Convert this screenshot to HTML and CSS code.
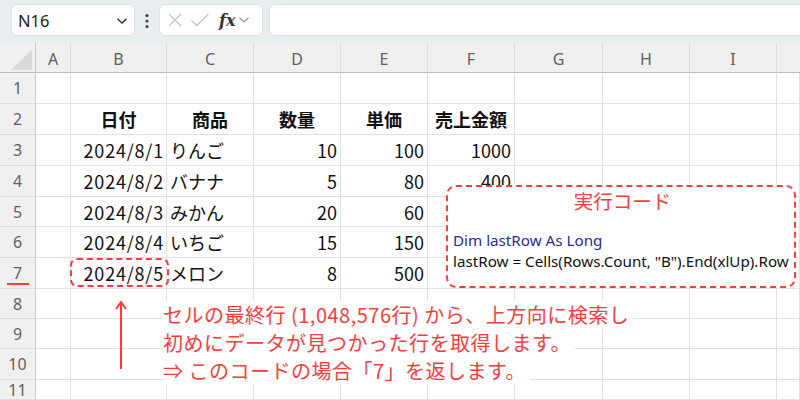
FILE: index.html
```html
<!DOCTYPE html>
<html lang="ja">
<head>
<meta charset="utf-8">
<title>Excel lastRow</title>
<link rel="stylesheet" href="styles.css">
</head>
<body>
<div class="app">
  <div class="toolbar">
    <div class="namebox">
      <span class="name">N16</span>
      <svg class="chev" width="12" height="8" viewBox="0 0 12 8"><path d="M1.5 1.8 L6 6 L10.5 1.8" fill="none" stroke="#333" stroke-width="1.4"/></svg>
    </div>
    <svg class="dots" width="6" height="16" viewBox="0 0 6 16"><circle cx="3" cy="2.5" r="1.6" fill="#444"/><circle cx="3" cy="8" r="1.6" fill="#444"/><circle cx="3" cy="13.5" r="1.6" fill="#444"/></svg>
    <div class="fxgroup">
      <svg width="16" height="16" viewBox="0 0 16 16"><path d="M2 2 L14 14 M14 2 L2 14" stroke="#c4c4c4" stroke-width="1.3" fill="none"/></svg>
      <svg width="20" height="16" viewBox="0 0 20 16"><path d="M1.5 8.5 L7 13.5 L18.5 2" stroke="#c4c4c4" stroke-width="1.3" fill="none"/></svg>
      <span class="fx">fx</span>
      <svg width="12" height="8" viewBox="0 0 12 8"><path d="M1.5 1.8 L6 6 L10.5 1.8" fill="none" stroke="#9a9a9a" stroke-width="1.2"/></svg>
    </div>
    <div class="formula"></div>
  </div>

  <div class="sheet">
    <div class="corner"><span class="tri"></span></div>
    <div class="ch">A</div><div class="ch">B</div><div class="ch">C</div><div class="ch">D</div><div class="ch">E</div><div class="ch">F</div><div class="ch">G</div><div class="ch">H</div><div class="ch">I</div><div class="ch last"></div>

    <div class="rh">1</div><div class="c"></div><div class="c"></div><div class="c"></div><div class="c"></div><div class="c"></div><div class="c"></div><div class="c"></div><div class="c"></div><div class="c"></div><div class="c"></div>

    <div class="rh">2</div><div class="c"></div><div class="c hd">日付</div><div class="c hd">商品</div><div class="c hd">数量</div><div class="c hd">単価</div><div class="c hd">売上金額</div><div class="c"></div><div class="c"></div><div class="c"></div><div class="c"></div>

    <div class="rh">3</div><div class="c"></div><div class="c r dt">2024/8/1</div><div class="c l">りんご</div><div class="c r">10</div><div class="c r">100</div><div class="c r">1000</div><div class="c"></div><div class="c"></div><div class="c"></div><div class="c"></div>

    <div class="rh">4</div><div class="c"></div><div class="c r dt">2024/8/2</div><div class="c l">バナナ</div><div class="c r">5</div><div class="c r">80</div><div class="c r">400</div><div class="c"></div><div class="c"></div><div class="c"></div><div class="c"></div>

    <div class="rh">5</div><div class="c"></div><div class="c r dt">2024/8/3</div><div class="c l">みかん</div><div class="c r">20</div><div class="c r">60</div><div class="c"></div><div class="c"></div><div class="c"></div><div class="c"></div><div class="c"></div>

    <div class="rh">6</div><div class="c"></div><div class="c r dt">2024/8/4</div><div class="c l">いちご</div><div class="c r">15</div><div class="c r">150</div><div class="c"></div><div class="c"></div><div class="c"></div><div class="c"></div><div class="c"></div>

    <div class="rh">7</div><div class="c"></div><div class="c r dt">2024/8/5</div><div class="c l">メロン</div><div class="c r">8</div><div class="c r">500</div><div class="c"></div><div class="c"></div><div class="c"></div><div class="c"></div><div class="c"></div>

    <div class="rh">8</div><div class="c"></div><div class="c"></div><div class="c"></div><div class="c"></div><div class="c"></div><div class="c"></div><div class="c"></div><div class="c"></div><div class="c"></div><div class="c"></div>

    <div class="rh">9</div><div class="c"></div><div class="c"></div><div class="c"></div><div class="c"></div><div class="c"></div><div class="c"></div><div class="c"></div><div class="c"></div><div class="c"></div><div class="c"></div>

    <div class="rh">10</div><div class="c"></div><div class="c"></div><div class="c"></div><div class="c"></div><div class="c"></div><div class="c"></div><div class="c"></div><div class="c"></div><div class="c"></div><div class="c"></div>

    <div class="rh">11</div><div class="c"></div><div class="c"></div><div class="c"></div><div class="c"></div><div class="c"></div><div class="c"></div><div class="c"></div><div class="c"></div><div class="c"></div><div class="c"></div>
  </div>

  <div class="rowmark"></div>
  <div class="datebox"></div>
  <svg class="arrow" width="16" height="72" viewBox="0 0 16 72"><path d="M8 3 L8 70 M3 10 L8 3 L13 10" fill="none" stroke="#ff3b3b" stroke-width="2"/></svg>

  <div class="codebox">
    <div class="codetitle">実行コード</div>
    <div class="code">
      <div class="kw">Dim lastRow As Long</div>
      <div>lastRow = Cells(Rows.Count, "B").End(xlUp).Row</div>
    </div>
  </div>

  <div class="note">
    <span class="line">セルの最終行 (1,048,576行) から、上方向に検索し</span>
    <span class="line">初めにデータが見つかった行を取得します。</span>
    <span class="line">⇒ このコードの場合「7」を返します。</span>
  </div>
</div>
</body>
</html>
```

FILE: styles.css
```css
* { box-sizing: border-box; }
html, body { margin: 0; padding: 0; }
body {
  width: 800px;
  height: 400px;
  overflow: hidden;
  background: #fff;
  font-family: "Noto Sans CJK JP", "Noto Sans", sans-serif;
}
.app { position: relative; width: 800px; height: 400px; overflow: hidden; }

.toolbar {
  height: 43px;
  background: #e8edf0;
  display: flex;
  align-items: flex-start;
  padding: 4px 0 0 11px;
}
.namebox {
  width: 124px;
  height: 32px;
  background: #fff;
  border: 1px solid #dde2e6;
  border-radius: 6px;
  display: flex;
  align-items: center;
  justify-content: space-between;
  padding: 0 6px 0 6px;
}
.name { font-family: "Noto Sans", sans-serif; font-size: 16.5px; color: #222; }
.chev { margin-top: 2px; }
.dots { margin: 9px 9px 0 9px; }
.fxgroup {
  width: 104px;
  height: 32px;
  background: #fff;
  border: 1px solid #dde2e6;
  border-radius: 6px;
  display: flex;
  align-items: center;
  padding: 0 4px 0 7px;
  gap: 7px;
}
.fx {
  font-family: "DejaVu Serif", serif;
  font-style: italic;
  font-weight: bold;
  font-size: 16px;
  color: #333;
  margin-left: 2px;
  margin-right: -4px;
}
.formula {
  margin-left: 6px;
  flex: 1;
  height: 32px;
  background: #fff;
  border: 1px solid #dde2e6;
  border-right: none;
  border-radius: 6px 0 0 6px;
}

.sheet {
  display: grid;
  grid-template-columns: 36px 35px 96px 87px 87px 87px 87px 88px 87px 87px 23px;
  grid-template-rows: 30px 31px 31px 31px 31px 30px 31px 31px 30px 30px 31px 20px;
  background: #fff;
}
.corner {
  background: #f0f0f0;
  border-right: 1px solid #c8c8c8;
  border-bottom: 1px solid #bdbdbd;
  position: relative;
}
.tri {
  position: absolute;
  right: 3px;
  bottom: 2px;
  width: 0; height: 0;
  border-left: 21px solid transparent;
  border-bottom: 21px solid #dadada;
}
.ch {
  background: #f0f0f0;
  border-right: 1px solid #dcdcdc;
  border-bottom: 1px solid #bdbdbd;
  display: flex;
  align-items: center;
  justify-content: center;
  font-family: "Noto Sans", sans-serif;
  font-size: 16px;
  color: #5f5f5f;
  padding-top: 2px;
}
.ch.last { border-right: none; }
.rh {
  background: #f0f0f0;
  border-right: 1px solid #c8c8c8;
  border-bottom: 1px solid #dcdcdc;
  display: flex;
  align-items: center;
  justify-content: center;
  font-family: "Noto Sans", sans-serif;
  font-size: 16px;
  color: #5f5f5f;
}
.c {
  border-right: 1px solid #e2e2e2;
  border-bottom: 1px solid #e2e2e2;
  display: flex;
  align-items: center;
  font-size: 18px;
  color: #111;
  white-space: nowrap;
}
.hd { justify-content: center; font-weight: bold; }
.r { justify-content: flex-end; padding-right: 3px; }
.l { justify-content: flex-start; padding-left: 3px; }
.dt { letter-spacing: 0.8px; padding-right: 2px; }

.rowmark {
  position: absolute;
  left: 7px; top: 283px;
  width: 22px; height: 2px;
  background: #ff3b3b;
}
.datebox {
  position: absolute;
  left: 70px; top: 258px;
  width: 99px; height: 29px;
  border: 2px dashed #ff3b3b;
  border-radius: 7px;
}
.arrow { position: absolute; left: 113px; top: 299px; }

.codebox {
  position: absolute;
  left: 446px; top: 185px;
  width: 350px; height: 103px;
  background: #fff;
  border: 2px dashed #ff3b3b;
  border-radius: 10px;
  padding: 0 2px 0 5px;
}
.codetitle {
  text-align: center;
  color: #ff3b3b;
  font-size: 19.5px;
  line-height: 26px;
  margin-top: 1px;
}
.code {
  margin-top: 16px;
  font-family: "Noto Sans", sans-serif;
  font-size: 15.2px;
  line-height: 21px;
  color: #111;
  white-space: nowrap;
}
.kw { color: #2b2b9e; }

.note {
  position: absolute;
  left: 163px; top: 301px;
  color: #ff3b3b;
  font-size: 20px;
  letter-spacing: 0.5px;
  line-height: 28px;
}
.line {
  display: block;
  width: fit-content;
  background: #fff;
  padding-right: 4px;
  white-space: nowrap;
}
```
